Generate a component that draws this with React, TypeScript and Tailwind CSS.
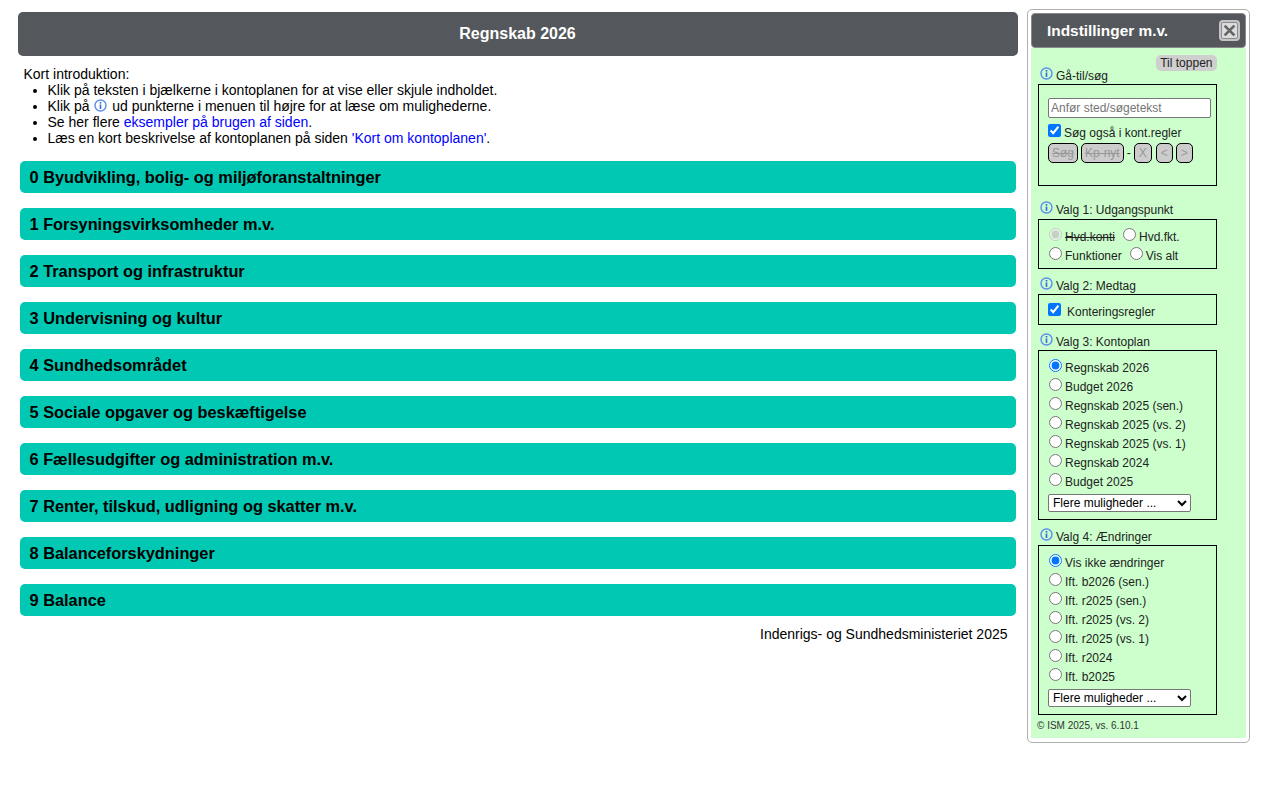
import React from "react";

const sections = [
  "0 Byudvikling, bolig- og miljøforanstaltninger",
  "1 Forsyningsvirksomheder m.v.",
  "2 Transport og infrastruktur",
  "3 Undervisning og kultur",
  "4 Sundhedsområdet",
  "5 Sociale opgaver og beskæftigelse",
  "6 Fællesudgifter og administration m.v.",
  "7 Renter, tilskud, udligning og skatter m.v.",
  "8 Balanceforskydninger",
  "9 Balance",
];

const plans = [
  "Regnskab 2026",
  "Budget 2026",
  "Regnskab 2025 (sen.)",
  "Regnskab 2025 (vs. 2)",
  "Regnskab 2025 (vs. 1)",
  "Regnskab 2024",
  "Budget 2025",
];

const changes = [
  "Vis ikke ændringer",
  "Ift. b2026 (sen.)",
  "Ift. r2025 (sen.)",
  "Ift. r2025 (vs. 2)",
  "Ift. r2025 (vs. 1)",
  "Ift. r2024",
  "Ift. b2025",
];

const InfoIcon = () => (
  <svg viewBox="0 0 13 13" className="block w-[13px] h-[13px] shrink-0" fill="none">
    <circle cx="6.5" cy="6.5" r="5.5" stroke="#5b8def" strokeWidth="1.4" />
    <rect x="5.7" y="5.5" width="1.6" height="4.4" fill="#2f66dd" />
    <rect x="5.7" y="3" width="1.6" height="1.6" fill="#2f66dd" />
  </svg>
);

const Legend = ({ label }: { label: string }) => (
  <div className="flex items-start h-[17px] pl-[2px] gap-[3px]">
    <InfoIcon />
    <span className="leading-[14px] mt-[2px]">{label}</span>
  </div>
);

const Radio = ({ label, checked, disabled }: { label: string; checked?: boolean; disabled?: boolean }) => (
  <label className="flex h-[19px] items-start">
    <input
      type="radio"
      defaultChecked={checked}
      disabled={disabled}
      className="w-[13px] h-[13px] ml-[1px] mr-[3px] mt-0"
    />
    <span className={"leading-[14px] mt-[2px] " + (disabled ? "line-through" : "")}>{label}</span>
  </label>
);

const SmallButton = ({ label }: { label: string }) => (
  <span className="h-[20px] px-[3px] border border-black rounded-[5px] bg-[#cccccc] text-[#999999] line-through leading-[18px]">
    {label}
  </span>
);

const ArrowButton = ({ label }: { label: string }) => (
  <span className="h-[20px] px-[4px] border border-black rounded-[5px] bg-[#cccccc] text-[#999999] leading-[18px]">
    {label}
  </span>
);

const MoreSelect = () => (
  <select className="block w-[143px] h-[18px] mt-[2px] bg-white border border-[#767676] rounded-[2px] text-[12px] text-black">
    <option>Flere muligheder ...</option>
  </select>
);

export default function App() {
  return (
    <div className="flex items-start w-[1280px] h-[800px] bg-white text-black font-['Liberation_Sans',Arial,sans-serif] text-[14px] overflow-hidden">
      {/* Left column */}
      <main className="w-[1000px] ml-[18px] mt-[12px]">
        <h1 className="h-[44px] flex items-center justify-center pr-[1px] bg-[#54575b] rounded-[5px] text-white text-[16px] font-bold">
          Regnskab 2026
        </h1>

        <div className="ml-[5.5px] mt-[10px] leading-[16px]">
          <p>Kort introduktion:</p>
          <ul className="list-disc pl-[24px]">
            <li>Klik på teksten i bjælkerne i kontoplanen for at vise eller skjule indholdet.</li>
            <li>
              Klik på{" "}
              <span className="inline-block h-[13px] align-[-1px] mx-[1px]">
                <InfoIcon />
              </span>{" "}
              ud punkterne i menuen til højre for at læse om mulighederne.
            </li>
            <li>
              Se her flere <a className="text-[#0000ff]">eksempler på brugen af siden</a>.
            </li>
            <li>
              Læs en kort beskrivelse af kontoplanen på siden{" "}
              <a className="text-[#0000ff]">'Kort om kontoplanen'</a>.
            </li>
          </ul>
        </div>

        <div className="flex flex-col gap-[15px] mt-[15px] mx-[2px]">
          {sections.map((s) => (
            <div
              key={s}
              className="h-[32px] flex items-center px-[9.5px] bg-[#00c8b3] rounded-[5px] text-[16.35px] font-bold"
            >
              {s}
            </div>
          ))}
        </div>

        <p className="text-right pr-[10.5px] mt-[10px] leading-[16px]">Indenrigs- og Sundhedsministeriet 2025</p>
      </main>

      {/* Settings panel */}
      <aside className="w-[223px] h-[734px] ml-[9px] mt-[9px] p-[3px] border border-[#b0b0b0] rounded-[5px]">
        <div className="h-[35px] flex items-center justify-between pl-[15px] pr-[5px] bg-[#54575b] rounded-[4px] border border-[#8a8a8a] text-white text-[15.4px] font-bold">
          <span>Indstillinger m.v.</span>
          <span className="w-[21px] h-[21px] flex items-center justify-center bg-[#cfcfcf] border-2 border-[#c4c4c4] rounded-[4px]">
            <span className="w-[17px] h-[17px] flex items-center justify-center bg-[#dcdcdc] border border-[#8c8c8c] rounded-[2px]">
              <svg viewBox="0 0 12 12" className="w-[13px] h-[13px]" stroke="#666" strokeWidth="2.6">
                <path d="M1.5 1.5 L10.5 10.5 M10.5 1.5 L1.5 10.5" />
              </svg>
            </span>
          </span>
        </div>

        <div className="h-[690px] bg-[#ccffcc] pl-[7px] text-[12px] text-[#222]">
          <div className="w-[179px] h-[19px] flex justify-end pt-[7px]">
            <span className="h-[16px] px-[4.5px] bg-[#cfcfcf] rounded-[5px] leading-[16px]">Til toppen</span>
          </div>

          <Legend label="Gå-til/søg" />
          <div className="w-[179px] h-[102px] border border-black pl-[9px] pt-[13px]">
            <input
              placeholder="Anfør sted/søgetekst"
              className="block w-[163px] h-[20px] bg-white border border-[#767676] rounded-[2px] px-[2px] text-[12px] placeholder:text-[#757575]"
            />
            <label className="flex items-start mt-[6px] h-[19px]">
              <input type="checkbox" defaultChecked className="w-[13px] h-[13px] mr-[3px]" />
              <span className="leading-[14px] mt-[2px]">Søg også i kont.regler</span>
            </label>
            <div className="flex items-center gap-[3px]">
              <SmallButton label="Søg" />
              <SmallButton label="Kp-nyt" />
              <span>-</span>
              <ArrowButton label="X" />
              <span className="ml-[1px] flex gap-[3px]">
                <ArrowButton label="<" />
                <ArrowButton label=">" />
              </span>
            </div>
          </div>

          <div className="mt-[15px] mb-[1px]">
            <Legend label="Valg 1: Udgangspunkt" />
          </div>
          <div className="w-[179px] h-[50px] border border-black pl-[9px] pt-[8px]">
            <div className="flex gap-[7px]">
              <Radio label="Hvd.konti" disabled checked />
              <Radio label="Hvd.fkt." />
            </div>
            <div className="flex gap-[7px]">
              <Radio label="Funktioner" />
              <Radio label="Vis alt" />
            </div>
          </div>

          <div className="mt-[8px]">
            <Legend label="Valg 2: Medtag" />
          </div>
          <div className="w-[179px] h-[31px] border border-black pl-[9px] pt-[8px]">
            <label className="flex items-start">
              <input type="checkbox" defaultChecked className="w-[13px] h-[13px] mr-[6px]" />
              <span className="leading-[14px] mt-[2px]">Konteringsregler</span>
            </label>
          </div>

          <div className="mt-[8px]">
            <Legend label="Valg 3: Kontoplan" />
          </div>
          <div className="w-[179px] h-[170px] border border-black pl-[9px] pt-[8px]">
            {plans.map((p, i) => (
              <Radio key={p} label={p} checked={i === 0} />
            ))}
            <MoreSelect />
          </div>

          <div className="mt-[8px]">
            <Legend label="Valg 4: Ændringer" />
          </div>
          <div className="w-[179px] h-[170px] border border-black pl-[9px] pt-[8px]">
            {changes.map((c, i) => (
              <Radio key={c} label={c} checked={i === 0} />
            ))}
            <MoreSelect />
          </div>

          <p className="text-[10px] text-[#333] -ml-[1px] mt-[5px] leading-[12px]">© ISM 2025, vs. 6.10.1</p>
        </div>
      </aside>
    </div>
  );
}
